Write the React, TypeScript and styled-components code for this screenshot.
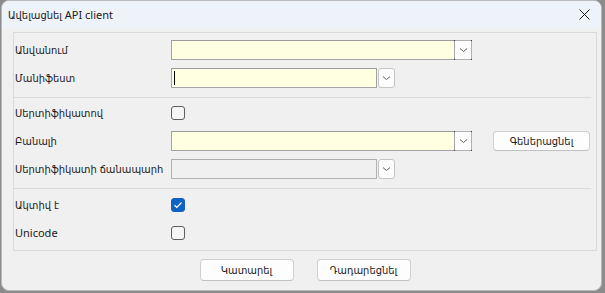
import React from "react";
import styled, { createGlobalStyle } from "styled-components";

const Global = createGlobalStyle`
  html, body { margin: 0; padding: 0; }
  body {
    width: 605px; height: 293px; overflow: hidden;
    background: #8b8b8b;
    font-family: "Noto Sans", "DejaVu Sans Condensed", "DejaVu Sans", sans-serif;
    font-size: 11px; color: #1b1b1b;
  }
`;

const Window = styled.div`
  box-sizing: border-box;
  width: 601px;
  height: 291px;
  margin-left: 1px;
  background: #f0f0f0;
  border: 1px solid #b9b9b9;
  border-radius: 8px;
  overflow: hidden;
  display: flex;
  flex-direction: column;
`;

const TitleBar = styled.div`
  height: 27px;
  flex: none;
  background: #eef2f9;
  display: flex;
  align-items: center;
  justify-content: space-between;
  padding: 0 6px 0 6px;
`;

const Title = styled.span`
  font-size: 11px;
  color: #1a1a1a;
  padding-bottom: 1px;
`;

const CloseBtn = styled.div`
  width: 20px;
  height: 20px;
  display: flex;
  align-items: center;
  justify-content: center;
  margin-right: 1px;
`;

const Panel = styled.div`
  margin: 4px 4px 0 11px;
  border: 1px solid #d9d9d9;
  padding: 3px 0 3px 0;
  display: flex;
  flex-direction: column;
`;

const Row = styled.div`
  height: 28px;
  display: grid;
  grid-template-columns: 157px 1fr;
  align-items: center;
`;

const Label = styled.span`
  padding-left: 1px;
  padding-bottom: 2px;
  white-space: nowrap;
`;

const Controls = styled.div`
  display: flex;
  align-items: center;
`;

const Separator = styled.div<{ $after: number }>`
  height: 1px;
  background: #dadada;
  margin: 5px 5px ${(p) => p.$after}px 0;
`;

const Field = styled.div<{ $w: number; $disabled?: boolean }>`
  box-sizing: border-box;
  width: ${(p) => p.$w}px;
  height: 20px;
  background: ${(p) => (p.$disabled ? "#f0f0f0" : "#ffffe1")};
  border: 1px solid ${(p) => (p.$disabled ? "#b3b3b3" : "#a4a4a4")};
  border-top-color: ${(p) => (p.$disabled ? "#adadad" : "#9a9a9a")};
  display: flex;
  align-items: center;
  padding-left: 2px;
`;

const Caret = styled.span`
  width: 1px;
  height: 14px;
  background: #000;
`;

const AttachedDrop = styled.div`
  box-sizing: border-box;
  width: 17px;
  height: 20px;
  background: #fdfdfd;
  border: 1px solid #b0b0b0;
  border-left: none;
  display: flex;
  align-items: center;
  justify-content: center;
  position: relative;
`;

const Corner = styled.span<{ $t?: boolean; $r?: boolean }>`
  position: absolute;
  width: 1px;
  height: 1px;
  background: #333;
  ${(p) => (p.$t ? "top: -1px;" : "bottom: -1px;")}
  ${(p) => (p.$r ? "right: -1px;" : "left: -1px;")}
`;

const SepDrop = styled.div`
  box-sizing: border-box;
  width: 17px;
  height: 20px;
  margin-left: 1px;
  background: #fdfdfd;
  border: 1px solid #c4c4c4;
  border-radius: 3px;
  display: flex;
  align-items: center;
  justify-content: center;
`;

const Check = styled.div<{ $on?: boolean }>`
  box-sizing: border-box;
  width: 14px;
  height: 14px;
  border-radius: 3px;
  margin-left: 0;
  border: 1px solid ${(p) => (p.$on ? "#0f62c2" : "#5e5e5e")};
  background: ${(p) => (p.$on ? "#0f62c2" : "#f5f5f5")};
  display: flex;
  align-items: center;
  justify-content: center;
`;

const Button = styled.div<{ $w: number; $h: number }>`
  box-sizing: border-box;
  width: ${(p) => p.$w}px;
  height: ${(p) => p.$h}px;
  background: #fdfdfd;
  border: 1px solid #cfcfcf;
  border-bottom-color: #c0c0c0;
  border-radius: 4px;
  display: flex;
  align-items: center;
  justify-content: center;
  padding-bottom: 1px;
  font-size: 11px;
  color: #1b1b1b;
`;

const GenButton = styled(Button)`
  margin-left: 21px;
`;

const Footer = styled.div`
  display: flex;
  justify-content: center;
  gap: 23px;
  padding: 8px 0 0 7px;
`;

const Chevron = () => (
  <svg width="9" height="6" viewBox="0 0 9 6">
    <path d="M1 1.5 L4.5 4.5 L8 1.5" fill="none" stroke="#606060" strokeWidth="1" />
  </svg>
);

const Attached = () => (
  <AttachedDrop>
    <Corner $t />
    <Corner $t $r />
    <Corner />
    <Corner $r />
    <Chevron />
  </AttachedDrop>
);

const Tick = () => (
  <svg width="10" height="8" viewBox="0 0 10 8">
    <path d="M1.5 4.2 L3.8 6.3 L8.5 1.5" fill="none" stroke="#ffffff" strokeWidth="1.2" />
  </svg>
);

export default function App() {
  return (
    <>
      <Global />
      <Window>
        <TitleBar>
          <Title>Ավելացնել API client</Title>
          <CloseBtn>
            <svg width="11" height="11" viewBox="0 0 11 11">
              <path d="M0.5 0.5 L10.5 10.5 M10.5 0.5 L0.5 10.5" stroke="#1a1a1a" strokeWidth="1" />
            </svg>
          </CloseBtn>
        </TitleBar>
        <Panel>
          <Row>
            <Label>Անվանում</Label>
            <Controls>
              <Field $w={284} />
              <Attached />
            </Controls>
          </Row>
          <Row>
            <Label>Մանիֆեստ</Label>
            <Controls>
              <Field $w={206}>
                <Caret />
              </Field>
              <SepDrop>
                <Chevron />
              </SepDrop>
            </Controls>
          </Row>
          <Separator $after={1} />
          <Row>
            <Label>Սերտիֆիկատով</Label>
            <Controls>
              <Check />
            </Controls>
          </Row>
          <Row>
            <Label>Բանալի</Label>
            <Controls>
              <Field $w={284} />
              <Attached />
              <GenButton $w={97} $h={20}>Գեներացնել</GenButton>
            </Controls>
          </Row>
          <Row>
            <Label>Սերտիֆիկատի ճանապարհ</Label>
            <Controls>
              <Field $w={206} $disabled />
              <SepDrop>
                <Chevron />
              </SepDrop>
            </Controls>
          </Row>
          <Separator $after={2} />
          <Row>
            <Label>Ակտիվ է</Label>
            <Controls>
              <Check $on>
                <Tick />
              </Check>
            </Controls>
          </Row>
          <Row>
            <Label>Unicode</Label>
            <Controls>
              <Check />
            </Controls>
          </Row>
        </Panel>
        <Footer>
          <Button $w={94} $h={22}>Կատարել</Button>
          <Button $w={94} $h={22}>Դադարեցնել</Button>
        </Footer>
      </Window>
    </>
  );
}
